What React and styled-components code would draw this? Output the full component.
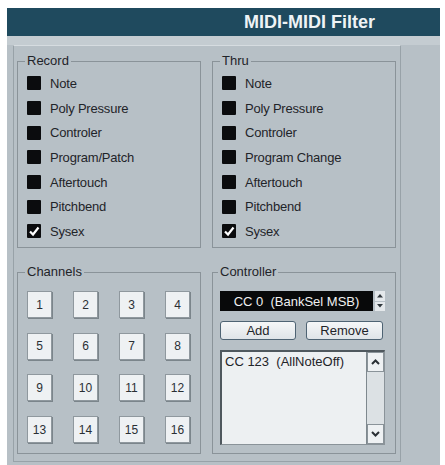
import styled, { createGlobalStyle } from "styled-components";

const GlobalStyle = createGlobalStyle`
  body {
    margin: 0;
    background: #ffffff;
    font-family: "Liberation Sans", Arial, sans-serif;
    color: #1f2429;
  }
`;

const Window = styled.div`
  margin: 8px 5px 0 7px;
  width: 433px;
  height: 457px;
  background: #b7c0c6;
  display: flex;
  flex-direction: column;
`;

const TitleBar = styled.div`
  height: 28px;
  flex: none;
  background: #1f4a5e;
  color: #eef3f5;
  font-weight: bold;
  font-size: 18px;
  display: flex;
  align-items: center;
  justify-content: flex-end;
  padding-right: 65px;
`;

const Body = styled.div`
  flex: 1;
  border-top: 9px solid #c4ccd1;
  padding: 0 39px 3px 6px;
  display: flex;
`;

const InnerPanel = styled.div`
  flex: 1;
  border-top: 1px solid #d6dce0;
  border-left: 1px solid #98a2a8;
  border-right: 1px solid #98a2a8;
  border-bottom: 1px solid #98a2a8;
  padding: 8px 0 0 3px;
  display: grid;
  grid-template-columns: 184px 184px;
  grid-template-rows: 194px 189px;
  column-gap: 11px;
  row-gap: 17px;
`;

const Group = styled.fieldset`
  margin: 0;
  min-width: 0;
  border: 1px solid #8a9399;
  padding: ${(p) => p.$pad || "3px 0 0 9px"};
`;

const Legend = styled.legend`
  font-size: 13px;
  line-height: 14px;
  padding: 0 2px;
  margin-left: -2px;
`;

const CheckList = styled.div`
  display: grid;
  grid-auto-rows: 24.7px;
`;

const CheckRow = styled.div`
  display: flex;
  align-items: center;
  gap: 9px;
  font-size: 13px;
  letter-spacing: -0.2px;
`;

const Box = styled.span`
  width: 14px;
  height: 14px;
  flex: none;
  background: #0b0c0e;
  border-radius: 1px;
  display: flex;
  align-items: center;
  justify-content: center;
`;

const ChannelGrid = styled.div`
  display: grid;
  grid-template-columns: repeat(4, 25px);
  grid-auto-rows: 27px;
  column-gap: 21px;
  row-gap: 14.7px;
`;

const ChannelButton = styled.div`
  background: #eef1f3;
  border: 1px solid #8f989e;
  box-shadow: 1px 1px 0 #7b858b;
  display: flex;
  align-items: center;
  justify-content: center;
  font-size: 12px;
  color: #2a2f33;
`;

const Column = styled.div`
  display: flex;
  flex-direction: column;
  gap: 10px;
`;

const SelectRow = styled.div`
  display: flex;
  gap: 2px;
  height: 20px;
`;

const SelectField = styled.div`
  width: 153px;
  background: #08090a;
  color: #f0f0f0;
  font-size: 13px;
  display: flex;
  align-items: center;
  justify-content: center;
  white-space: pre;
`;

const Spinner = styled.div`
  width: 10px;
  display: flex;
  flex-direction: column;
  gap: 1px;
`;

const SpinHalf = styled.div`
  flex: 1;
  background: #e4e8eb;
  display: flex;
  align-items: center;
  justify-content: center;
`;

const ButtonRow = styled.div`
  display: flex;
  gap: 10px;
  height: 19px;
`;

const PushButton = styled.div`
  width: ${(p) => p.$w}px;
  box-sizing: border-box;
  background: linear-gradient(#f5f7f8, #dfe4e8);
  border: 1px solid #4e6373;
  border-radius: 3px;
  font-size: 13px;
  display: flex;
  align-items: center;
  justify-content: center;
`;

const ListBox = styled.div`
  width: 165px;
  height: 95px;
  box-sizing: border-box;
  background: #edf0f2;
  border-top: 2px solid #4f585e;
  border-left: 2px solid #4f585e;
  border-right: 1px solid #8a9399;
  border-bottom: 1px solid #8a9399;
  display: flex;
`;

const ListItems = styled.div`
  flex: 1;
  font-size: 13px;
  padding: 2px 3px;
  white-space: pre;
`;

const ScrollBar = styled.div`
  width: 17px;
  background: #dce1e4;
  border-left: 1px solid #7e888e;
  display: flex;
  flex-direction: column;
  justify-content: space-between;
`;

const ScrollButton = styled.div`
  height: 18px;
  background: #eef1f3;
  border: 1px solid #8a9399;
  display: flex;
  align-items: center;
  justify-content: center;
`;

const recordItems = [
  "Note",
  "Poly Pressure",
  "Controler",
  "Program/Patch",
  "Aftertouch",
  "Pitchbend",
  "Sysex",
];

const thruItems = [
  "Note",
  "Poly Pressure",
  "Controler",
  "Program Change",
  "Aftertouch",
  "Pitchbend",
  "Sysex",
];

function Check({ checked }) {
  return (
    <Box>
      {checked && (
        <svg width="12" height="12" viewBox="0 0 12 12">
          <path d="M2 6.5 L5 9.5 L10.5 2.5" fill="none" stroke="#fff" strokeWidth="2.2" />
        </svg>
      )}
    </Box>
  );
}

function FilterGroup({ title, items }) {
  return (
    <Group>
      <Legend>{title}</Legend>
      <CheckList>
        {items.map((label) => (
          <CheckRow key={label}>
            <Check checked={label === "Sysex"} />
            {label}
          </CheckRow>
        ))}
      </CheckList>
    </Group>
  );
}

const Arrow = ({ up, size = 6 }) => (
  <svg width={size} height={size * 0.6} viewBox="0 0 10 6">
    <path d={up ? "M0 6 L5 0 L10 6 Z" : "M0 0 L5 6 L10 0 Z"} fill="#30373c" />
  </svg>
);

const Chevron = ({ up }) => (
  <svg width="9" height="6" viewBox="0 0 9 6">
    <path
      d={up ? "M1 5 L4.5 1.5 L8 5" : "M1 1 L4.5 4.5 L8 1"}
      fill="none"
      stroke="#2a3035"
      strokeWidth="2"
    />
  </svg>
);

export default function App() {
  return (
    <>
      <GlobalStyle />
      <Window>
        <TitleBar>MIDI-MIDI Filter</TitleBar>
        <Body>
          <InnerPanel>
            <FilterGroup title="Record" items={recordItems} />
            <FilterGroup title="Thru" items={thruItems} />
            <Group $pad="12px 0 0 9px">
              <Legend>Channels</Legend>
              <ChannelGrid>
                {Array.from({ length: 16 }, (_, i) => (
                  <ChannelButton key={i}>{i + 1}</ChannelButton>
                ))}
              </ChannelGrid>
            </Group>
            <Group $pad="12px 0 0 7px">
              <Legend>Controller</Legend>
              <Column>
                <SelectRow>
                  <SelectField>{"CC 0  (BankSel MSB)"}</SelectField>
                  <Spinner>
                    <SpinHalf>
                      <Arrow up />
                    </SpinHalf>
                    <SpinHalf>
                      <Arrow />
                    </SpinHalf>
                  </Spinner>
                </SelectRow>
                <ButtonRow>
                  <PushButton $w={76}>Add</PushButton>
                  <PushButton $w={77}>Remove</PushButton>
                </ButtonRow>
                <ListBox>
                  <ListItems>{"CC 123  (AllNoteOff)"}</ListItems>
                  <ScrollBar>
                    <ScrollButton>
                      <Chevron up />
                    </ScrollButton>
                    <ScrollButton>
                      <Chevron />
                    </ScrollButton>
                  </ScrollBar>
                </ListBox>
              </Column>
            </Group>
          </InnerPanel>
        </Body>
      </Window>
    </>
  );
}
